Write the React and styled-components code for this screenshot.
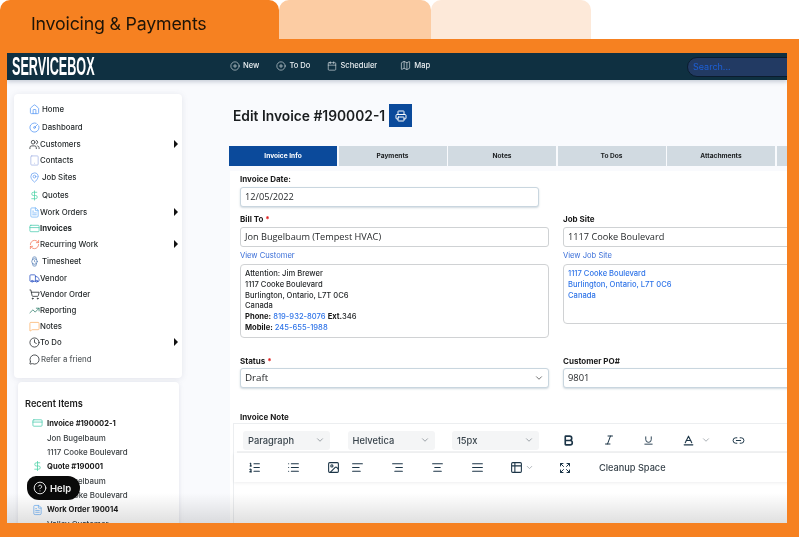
import React from "react";
import styled, { createGlobalStyle } from "styled-components";
import {
  Home, CircleGauge, Users, Tablet, MapPin, DollarSign, FileText, CreditCard, RefreshCw, Watch, Truck,
  ShoppingCart, TrendingUp, MessageSquare, Clock, MessageCircle, CirclePlus, Calendar, Map, Printer,
  ChevronDown, ListOrdered, List, Image, AlignLeft, AlignRight, AlignCenter, AlignJustify, Table2,
  Bold, Italic, Underline, Baseline, Link2, Expand, CircleHelp,
} from "lucide-react";

const sans = `Inter, "Open Sans", "Liberation Sans", sans-serif`;
const plain = `"Open Sans", "Noto Sans", "Liberation Sans", sans-serif`;

const GlobalStyle = createGlobalStyle`
  html, body { margin: 0; padding: 0; background: #fff; }
  * { box-sizing: border-box; }
  body { font-family: ${sans}; color: #1c1c1c; }
`;

const Page = styled.div`
  width: 800px;
  height: 538px;
  display: flex;
  flex-direction: column;
  overflow: hidden;
  filter: blur(0.3px);
`;

const TabStrip = styled.div`
  display: flex;
  height: 39px;
  flex: none;
`;

const FolderTab = styled.div`
  width: ${(p) => p.$w}px;
  background: ${(p) => p.$bg};
  border-radius: 10px 10px 0 0;
  padding: 13px 0 0 31px;
  font-size: 17.8px;
  line-height: 21px;
  color: #1d1408;
  letter-spacing: -0.2px;
`;

const Frame = styled.div`
  flex: 1;
  margin: 0 1px 1px 0;
  background: #f68121;
  padding: 14px 12px 14px 7px;
  min-height: 0;
`;

const Screen = styled.div`
  position: relative;
  height: 100%;
  background: #f9fafd;
  display: flex;
  flex-direction: column;
  overflow: hidden;
`;

const Navbar = styled.div`
  height: 27px;
  flex: none;
  background: #0f3041;
  display: flex;
  align-items: center;
  box-shadow: 0 2px 4px rgba(60, 80, 110, 0.25);
  overflow: hidden;
  z-index: 1;
`;

const Logo = styled.div`
  width: 83px;
  margin-left: 5px;
  flex: none;
  font-family: "Liberation Sans", sans-serif;
  font-weight: 700;
  font-size: 25px;
  line-height: 27px;
  color: #fff;
  white-space: nowrap;
  transform: scaleX(0.505);
  transform-origin: left center;
`;

const NavItem = styled.div`
  display: flex;
  align-items: center;
  gap: 3px;
  margin-left: ${(p) => p.$ml}px;
  margin-bottom: 2px;
  font-size: 7.6px;
  font-weight: 500;
  color: #e9eef1;
  white-space: nowrap;
`;

const Search = styled.div`
  width: 120px;
  height: 20px;
  flex: none;
  margin-left: auto;
  margin-right: -20px;
  border-radius: 10px;
  border: 1px solid #0b1c2e;
  background: #223a63;
  color: #1d5fd6;
  font-size: 9px;
  line-height: 18px;
  padding-left: 5px;
`;

const Body = styled.div`
  flex: 1;
  display: flex;
  min-height: 0;
`;

const Sidebar = styled.div`
  width: 222px;
  flex: none;
  padding: 14px 0 0 7px;
`;

const MenuCard = styled.div`
  width: 168px;
  height: 284px;
  background: #fff;
  border-radius: 4px;
  box-shadow: 0 1px 6px rgba(90, 100, 130, 0.14);
  padding: 6px 0 0 15px;
`;

const MenuRow = styled.div`
  height: ${(p) => p.$h}px;
  display: flex;
  align-items: center;
  gap: ${(p) => p.$gap}px;
  font-size: 7.8px;
  font-weight: ${(p) => (p.$active ? 700 : 500)};
  color: ${(p) => p.$color || "#1f2426"};
  white-space: nowrap;
`;

const MenuIcon = styled.span`
  width: 11px;
  height: 11px;
  flex: none;
  display: flex;
  align-items: center;
  justify-content: center;
  color: ${(p) => p.$color};
`;

const Caret = styled.span`
  margin-left: auto;
  margin-right: 4px;
  width: 0;
  height: 0;
  border-left: 4px solid #111;
  border-top: 4px solid transparent;
  border-bottom: 4px solid transparent;
`;

const RecentCard = styled.div`
  width: 161px;
  height: 160px;
  margin: 4px 0 0 4px;
  background: #fff;
  border-radius: 4px;
  box-shadow: 0 1px 5px rgba(90, 100, 130, 0.14);
  padding: 16px 0 0 7px;
  overflow: hidden;
`;

const RecentTitle = styled.div`
  font-size: 9.2px;
  font-weight: 600;
  line-height: 12px;
  margin-bottom: 6px;
`;

const RecentRow = styled.div`
  height: 14.4px;
  display: flex;
  align-items: center;
  gap: 4px;
  padding-left: ${(p) => (p.$sub ? 22 : 7)}px;
  font-size: ${(p) => (p.$sub ? 7.9 : 7.6)}px;
  font-weight: ${(p) => (p.$sub ? 500 : 700)};
  color: ${(p) => (p.$sub ? "#3c4144" : "#171717")};
  white-space: nowrap;
`;

const HelpButton = styled.div`
  position: absolute;
  left: 20px;
  top: 423px;
  width: 53px;
  height: 24px;
  border-radius: 9px 12px 12px 12px;
  background: #0a0a0a;
  color: #f2f2f2;
  display: flex;
  align-items: center;
  gap: 3px;
  padding-left: 6px;
  font-size: 9.5px;
  font-weight: 600;
  z-index: 3;
`;

const Main = styled.div`
  flex: none;
  width: 572px;
`;

const TitleRow = styled.div`
  display: flex;
  align-items: center;
  gap: 4px;
  height: 23px;
  margin: 24px 0 19px 4px;
`;

const Title = styled.h1`
  margin: 0;
  font-size: 13.8px;
  font-weight: 600;
  color: #1a1d1f;
`;

const PrintButton = styled.div`
  width: 23px;
  height: 23px;
  background: #0b4a9b;
  color: #fff;
  display: flex;
  align-items: center;
  justify-content: center;
`;

const Tabs = styled.div`
  display: flex;
  gap: 1.5px;
  height: 20px;
`;

const TabItem = styled.div`
  width: 108px;
  flex: none;
  background: ${(p) => (p.$active ? "#0b4a9b" : "#d1dae1")};
  color: ${(p) => (p.$active ? "#fff" : "#1a1d1f")};
  font-size: 6.6px;
  font-weight: 700;
  display: flex;
  align-items: center;
  justify-content: center;
`;

const FormCard = styled.div`
  margin-top: 5px;
  margin-left: 1px;
  background: #fff;
  padding: 3px 0 0 10px;
  height: 400px;
`;

const Label = styled.div`
  font-size: 8px;
  font-weight: 700;
  line-height: 10px;
  color: #1b1b1b;
  margin-top: ${(p) => p.$mt || 0}px;
  margin-bottom: ${(p) => p.$mb || 0}px;
  span { color: #e02020; }
`;

const Input = styled.div`
  height: ${(p) => p.$h || 20}px;
  width: ${(p) => (p.$w ? `${p.$w}px` : "100%")};
  border: 1px solid ${(p) => (p.$soft ? "#c9d6df" : "#cfd2d4")};
  border-radius: 3px;
  background: #fff;
  padding: 0 4px;
  font-family: ${plain};
  font-size: ${(p) => p.$fs || 9.2}px;
  line-height: 18px;
  color: #26292b;
  box-shadow: ${(p) => (p.$soft ? "0 1px 2px rgba(100,130,150,.3)" : "none")};
  display: flex;
  align-items: center;
  justify-content: space-between;
`;

const Columns = styled.div`
  display: grid;
  grid-template-columns: 309px 240px;
  column-gap: 14px;
`;

const TextLink = styled.div`
  font-size: 7.6px;
  line-height: 10px;
  color: #3b6fd8;
  margin: 4px 0 3px;
`;

const AddressBox = styled.div`
  height: ${(p) => p.$h}px;
  border: 1px solid #d0d2d4;
  border-radius: 4px;
  padding: 4px 4px;
  font-size: 7.6px;
  font-weight: 500;
  line-height: 10.8px;
  color: ${(p) => p.$color || "#26292b"};
  b { font-weight: 700; color: #151515; }
  a { color: #2f74e8; }
`;

const Editor = styled.div`
  width: 570px;
  margin: 1px 0 0 -7px;
  border: 1px solid #eceef0;
  border-right: none;
  height: 120px;
`;

const ToolRowTop = styled.div`
  display: flex;
  align-items: center;
  height: 27px;
  padding: 5px 0 0 9px;
  gap: 17.5px;
`;

const ToolSelect = styled.div`
  width: 87px;
  height: 19px;
  background: #f4f5f6;
  border-radius: 3px;
  display: flex;
  align-items: center;
  justify-content: space-between;
  padding: 0 5px;
  font-size: 9.3px;
  font-weight: 500;
  color: #39444c;
`;

const ToolGroup = styled.div`
  display: flex;
  align-items: center;
  margin-left: 0;
`;

const Tool = styled.span`
  width: 24px;
  height: 16px;
  flex: none;
  margin-left: ${(p) => p.$ml || 0}px;
  display: flex;
  align-items: center;
  justify-content: center;
  color: #1c3547;
  font-size: 9px;
`;

const ToolChevron = styled(ChevronDown)`
  flex: none;
  color: #9aa1a7;
  margin-left: ${(p) => p.$ml || 0}px;
`;

const ToolDivider = styled.div`
  height: 2px;
  margin-left: 3px;
  background: #f1f2f3;
`;

const ToolRowBottom = styled.div`
  display: flex;
  align-items: center;
  height: 29px;
  padding-left: 8px;
  box-shadow: 0 1px 3px rgba(80, 90, 100, 0.1);
`;

const CleanUp = styled.div`
  margin-left: 22px;
  font-size: 9.2px;
  font-weight: 500;
  color: #39444c;
`;

const Fade = styled.div`
  position: absolute;
  left: 0;
  right: 0;
  bottom: 0;
  height: 40px;
  background: linear-gradient(to bottom, #fff, #fff 25%, #e0e0e0);
  mix-blend-mode: multiply;
  z-index: 2;
  pointer-events: none;
`;

const menu = [
  { label: "Home", icon: Home, color: "#5b9af5", h: 18, gap: 2 },
  { label: "Dashboard", icon: CircleGauge, color: "#5b9af5", h: 18, gap: 2 },
  { label: "Customers", icon: Users, color: "#2a2f33", h: 16, gap: 0, caret: true },
  { label: "Contacts", icon: Tablet, color: "#a9b8e8", h: 16, gap: 0 },
  { label: "Job Sites", icon: MapPin, color: "#6ba2f2", h: 18, gap: 2 },
  { label: "Quotes", icon: DollarSign, color: "#4fd3a8", h: 18, gap: 2 },
  { label: "Work Orders", icon: FileText, color: "#74b4f7", h: 16, gap: 0, caret: true },
  { label: "Invoices", icon: CreditCard, color: "#4fcdb0", h: 16, gap: 0, active: true },
  { label: "Recurring Work", icon: RefreshCw, color: "#f4795b", h: 16, gap: 0, caret: true },
  { label: "Timesheet", icon: Watch, color: "#5b84b8", h: 18, gap: 2 },
  { label: "Vendor", icon: Truck, color: "#2f55c4", h: 16, gap: 0 },
  { label: "Vendor Order", icon: ShoppingCart, color: "#22272a", h: 16, gap: 0 },
  { label: "Reporting", icon: TrendingUp, color: "#2f7d6b", h: 16, gap: 0 },
  { label: "Notes", icon: MessageSquare, color: "#fbb36b", h: 16, gap: 0 },
  { label: "To Do", icon: Clock, color: "#22272a", h: 16, gap: 0, caret: true },
  { label: "Refer a friend", icon: MessageCircle, color: "#22272a", h: 18, gap: 1, soft: true },
];

const recent = [
  { label: "Invoice #190002-1", icon: CreditCard, color: "#4fcdb0" },
  { label: "Jon Bugelbaum", sub: true },
  { label: "1117 Cooke Boulevard", sub: true },
  { label: "Quote #190001", icon: DollarSign, color: "#4fd3a8" },
  { label: "Jon Bugelbaum", sub: true },
  { label: "1117 Cooke Boulevard", sub: true },
  { label: "Work Order 190014", icon: FileText, color: "#74b4f7" },
  { label: "Valley Customer", sub: true },
];

const App = () => (
  <Page>
    <GlobalStyle />
    <TabStrip>
      <FolderTab $w={279} $bg="#f68121">Invoicing &amp; Payments</FolderTab>
      <FolderTab $w={152} $bg="#fccca3" />
      <FolderTab $w={160} $bg="#fde9d9" />
    </TabStrip>
    <Frame>
      <Screen>
        <Navbar>
          <Logo>SERVICEBOX</Logo>
          <NavItem $ml={135}><CirclePlus size={10} strokeWidth={1.4} />New</NavItem>
          <NavItem $ml={17}><CirclePlus size={10} strokeWidth={1.4} />To Do</NavItem>
          <NavItem $ml={17}><Calendar size={10} strokeWidth={1.4} />Scheduler</NavItem>
          <NavItem $ml={23}><Map size={11} strokeWidth={1.4} />Map</NavItem>
          <Search>Search...</Search>
        </Navbar>
        <Body>
          <Sidebar>
            <MenuCard>
              {menu.map((item) => (
                <MenuRow key={item.label} $h={item.h} $gap={item.gap} $active={item.active} $color={item.soft ? "#5a5f62" : undefined}>
                  <MenuIcon $color={item.color}><item.icon size={11} strokeWidth={1.7} /></MenuIcon>
                  {item.label}
                  {item.caret && <Caret />}
                </MenuRow>
              ))}
            </MenuCard>
            <RecentCard>
              <RecentTitle>Recent Items</RecentTitle>
              {recent.map((item, i) => (
                <RecentRow key={i} $sub={item.sub}>
                  {item.icon && <MenuIcon $color={item.color}><item.icon size={12} strokeWidth={1.7} /></MenuIcon>}
                  {item.label}
                </RecentRow>
              ))}
            </RecentCard>
          </Sidebar>
          <Main>
            <TitleRow>
              <Title>Edit Invoice #190002-1</Title>
              <PrintButton><Printer size={12} strokeWidth={2} /></PrintButton>
            </TitleRow>
            <Tabs>
              <TabItem $active>Invoice Info</TabItem>
              <TabItem>Payments</TabItem>
              <TabItem>Notes</TabItem>
              <TabItem>To Dos</TabItem>
              <TabItem>Attachments</TabItem>
              <TabItem />
            </Tabs>
            <FormCard>
              <Label $mb={3}>Invoice Date:</Label>
              <Input $w={299} $soft>12/05/2022</Input>
              <Columns>
                <div>
                  <Label $mt={7} $mb={3}>Bill To <span>*</span></Label>
                  <Input>Jon Bugelbaum (Tempest HVAC)</Input>
                  <TextLink>View Customer</TextLink>
                  <AddressBox $h={74}>
                    Attention: Jim Brewer<br />
                    1117 Cooke Boulevard<br />
                    Burlington, Ontario, L7T 0C6<br />
                    Canada<br />
                    <b>Phone:</b> <a>819-932-8076</a> <b>Ext.</b>346<br />
                    <b>Mobile:</b> <a>245-655-1988</a>
                  </AddressBox>
                  <Label $mt={18} $mb={2}>Status <span>*</span></Label>
                  <Input $soft $fs={9.8}>Draft <ChevronDown size={10} color="#555" /></Input>
                </div>
                <div>
                  <Label $mt={7} $mb={3}>Job Site</Label>
                  <Input>1117 Cooke Boulevard</Input>
                  <TextLink>View Job Site</TextLink>
                  <AddressBox $h={60} $color="#2f74e8">
                    1117 Cooke Boulevard<br />
                    Burlington, Ontario, L7T 0C6<br />
                    Canada
                  </AddressBox>
                  <Label $mt={32} $mb={2}>Customer PO#</Label>
                  <Input $soft $fs={9.4}>9801</Input>
                </div>
              </Columns>
              <Label $mt={24}>Invoice Note</Label>
              <Editor>
                <ToolRowTop>
                  <ToolSelect>Paragraph <ChevronDown size={10} color="#8a9299" /></ToolSelect>
                  <ToolSelect>Helvetica <ChevronDown size={10} color="#8a9299" /></ToolSelect>
                  <ToolSelect>15px <ChevronDown size={10} color="#8a9299" /></ToolSelect>
                  <ToolGroup>
                    <Tool><Bold size={13} strokeWidth={3} /></Tool>
                    <Tool $ml={16}><Italic size={12} strokeWidth={2} /></Tool>
                    <Tool $ml={16}><Underline size={11} strokeWidth={2} /></Tool>
                    <Tool $ml={16}><Baseline size={13} strokeWidth={2} /></Tool>
                    <ToolChevron size={10} />
                    <Tool $ml={16}><Link2 size={13} strokeWidth={1.8} /></Tool>
                  </ToolGroup>
                </ToolRowTop>
                <ToolDivider />
                <ToolRowBottom>
                  <Tool><ListOrdered size={13} strokeWidth={2} /></Tool>
                  <Tool $ml={15}><List size={13} strokeWidth={2} /></Tool>
                  <Tool $ml={16}><Image size={13} strokeWidth={2} /></Tool>
                  <Tool><AlignLeft size={13} strokeWidth={2} /></Tool>
                  <Tool $ml={16}><AlignRight size={13} strokeWidth={2} /></Tool>
                  <Tool $ml={16}><AlignCenter size={13} strokeWidth={2} /></Tool>
                  <Tool $ml={16}><AlignJustify size={13} strokeWidth={2} /></Tool>
                  <Tool $ml={15}><Table2 size={13} strokeWidth={2} /></Tool>
                  <ToolChevron size={9} $ml={-3} />
                  <Tool $ml={19}><Expand size={12} strokeWidth={2} /></Tool>
                  <CleanUp>Cleanup Space</CleanUp>
                </ToolRowBottom>
              </Editor>
            </FormCard>
          </Main>
        </Body>
        <HelpButton><CircleHelp size={14} strokeWidth={1.6} />Help</HelpButton>
        <Fade />
      </Screen>
    </Frame>
  </Page>
);

export default App;
